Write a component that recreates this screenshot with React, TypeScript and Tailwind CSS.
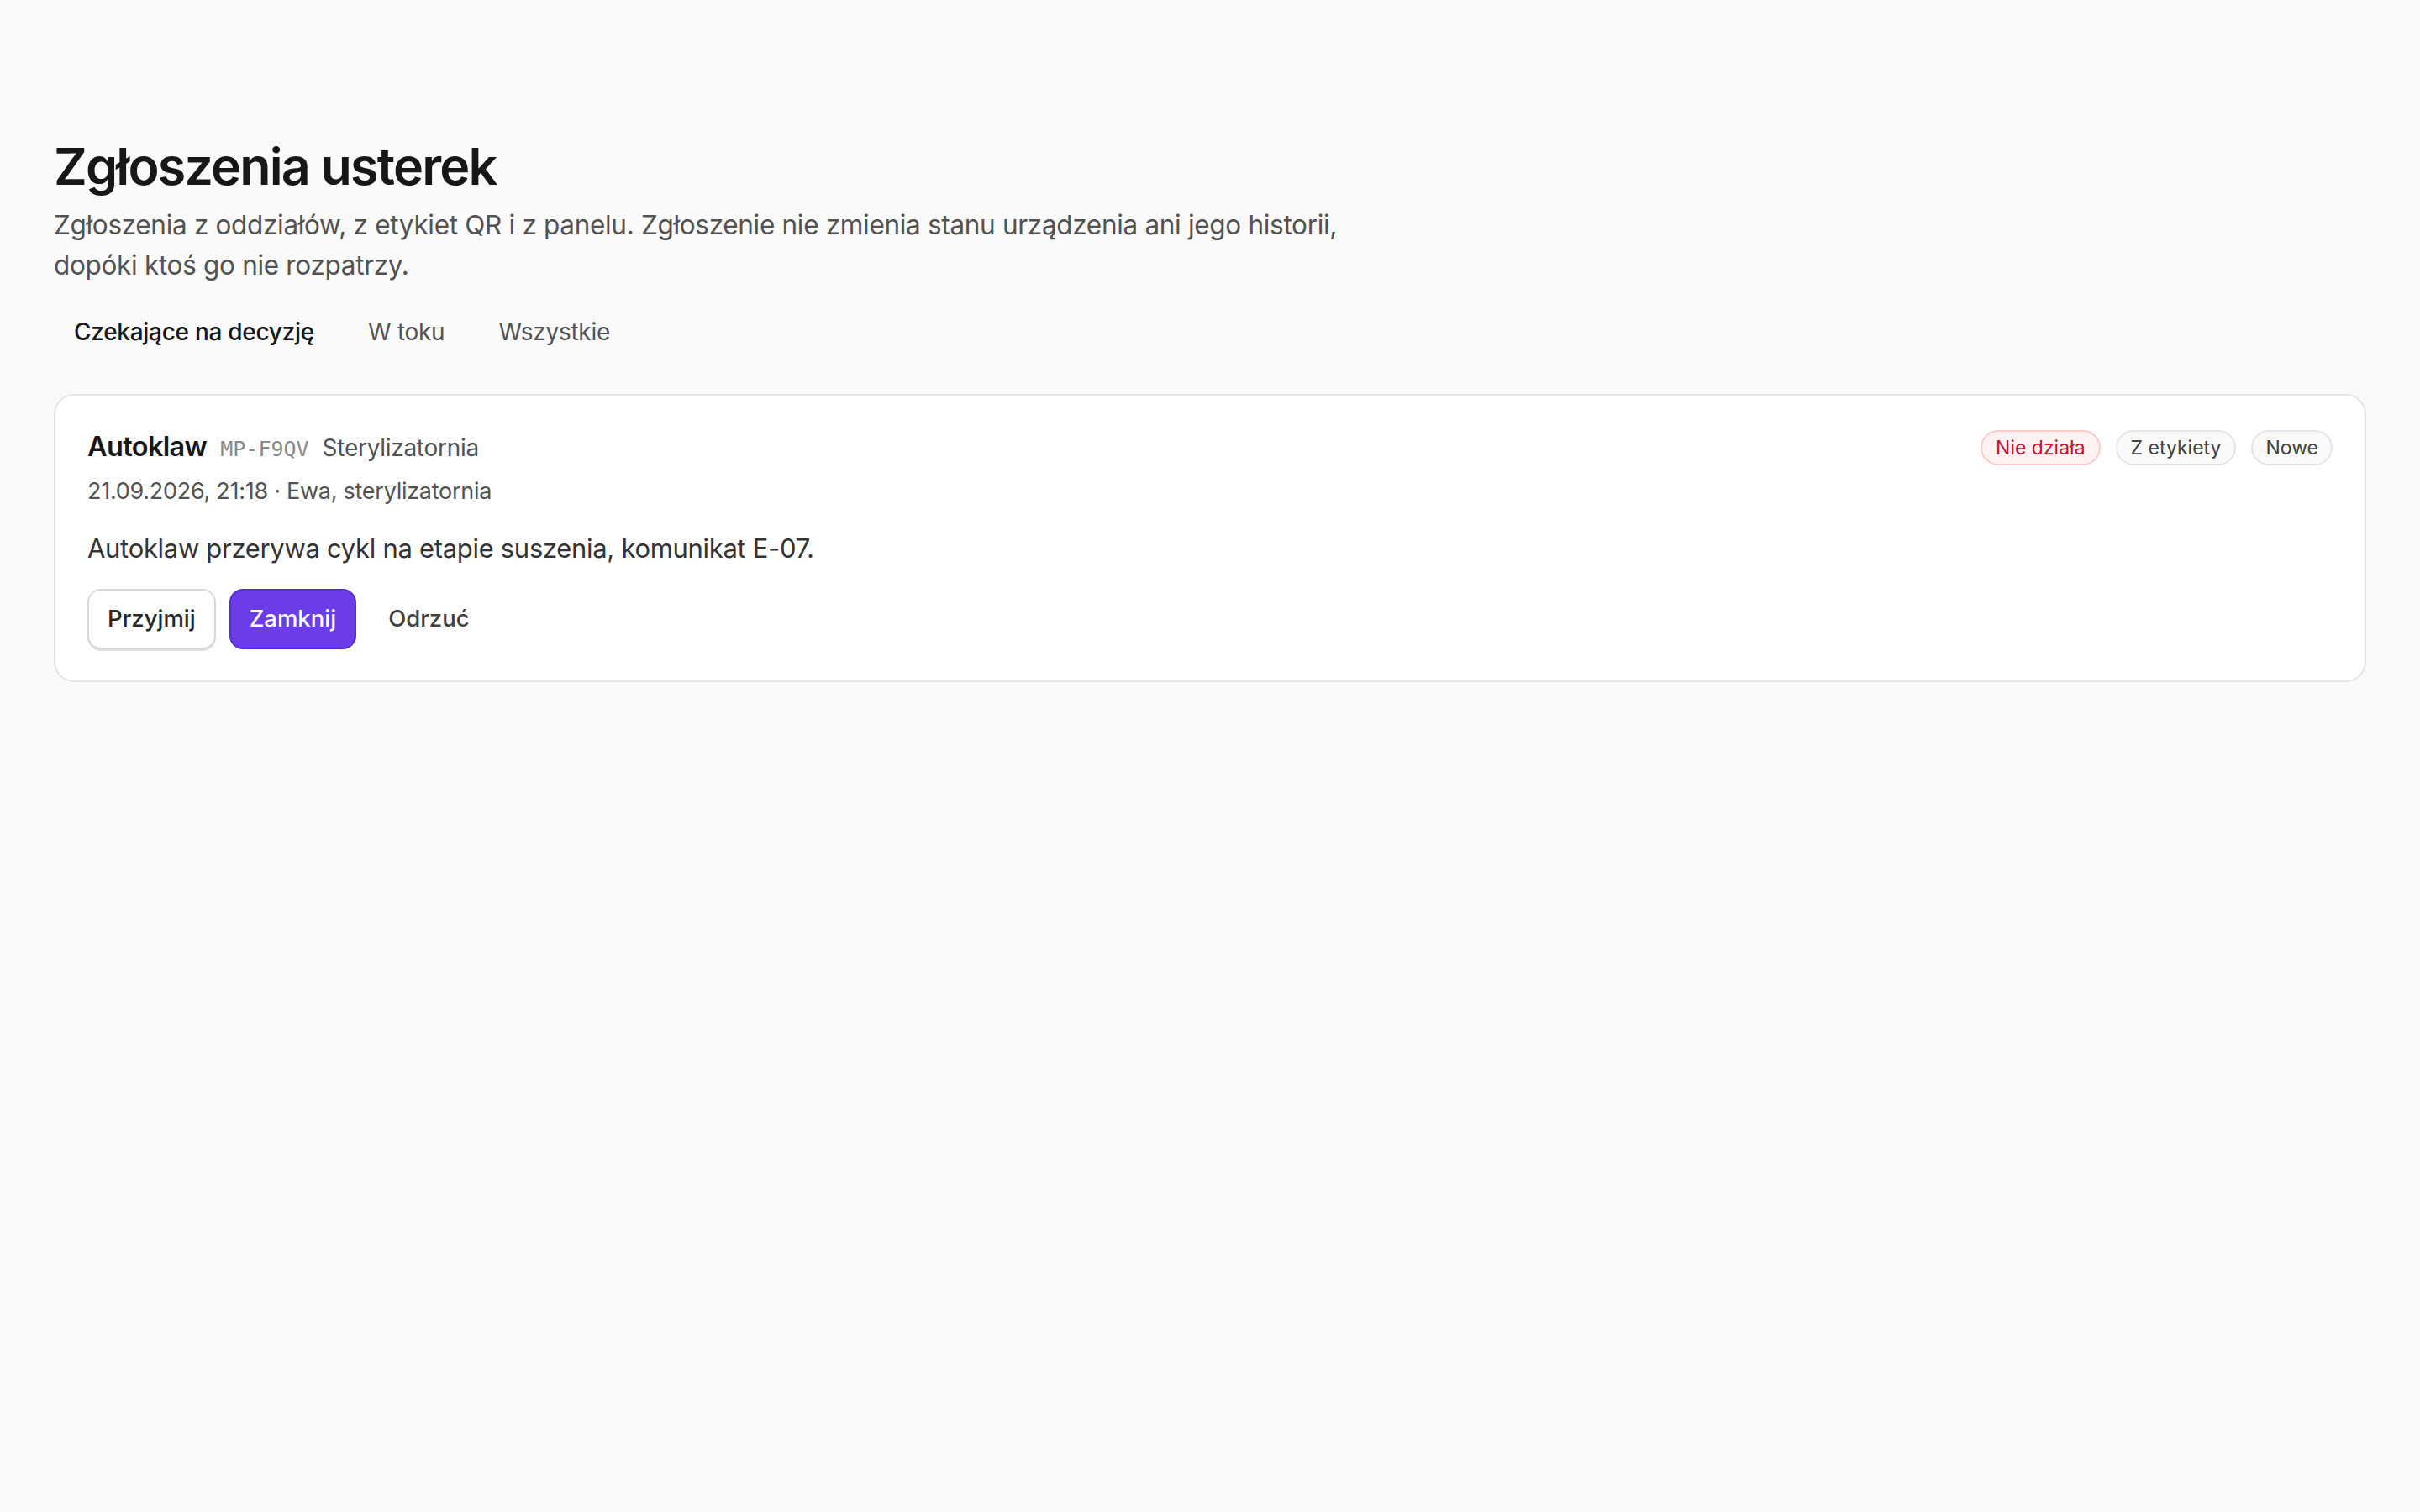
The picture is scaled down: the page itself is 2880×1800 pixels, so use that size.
export default function App() {
  const tabs = ["Czekające na decyzję", "W toku", "Wszystkie"];

  return (
    <div className="min-h-screen bg-[#fafafa] font-['Inter',sans-serif] text-[#171717]">
      <div className="px-16 pt-[162px]">
        <h1 className="text-[61px] font-semibold leading-[72px] tracking-[-0.03em]">Zgłoszenia usterek</h1>
        <p className="mt-[10px] max-w-[1600px] text-[31.5px] leading-[48px] tracking-[-0.01em] text-[#525252]">
          Zgłoszenia z oddziałów, z etykiet QR i z panelu. Zgłoszenie nie zmienia stanu urządzenia ani jego historii,
          dopóki ktoś go nie rozpatrzy.
        </p>

        {/* status tabs */}
        <div className="mt-[21px] flex gap-4">
          {tabs.map((t, i) => (
            <button
              key={t}
              className={
                i === 0
                  ? "px-6 py-3 text-[28px] leading-[44px] font-medium tracking-[-0.01em] text-[#171717]"
                  : "px-6 py-3 text-[28px] leading-[44px] tracking-[-0.01em] text-[#525252]"
              }
            >
              {t}
            </button>
          ))}
        </div>

        {/* report card */}
        <div className="mt-[40px] rounded-[24px] border-2 border-[#e5e5e5] bg-white px-[38px] pt-[41px] pb-[37px]">
          <div className="flex items-center justify-between">
            <div className="flex items-baseline gap-4">
              <span className="text-[32.5px] leading-[40px] font-semibold tracking-[-0.02em]">Autoklaw</span>
              <span className="font-['DejaVu_Sans_Mono',monospace] text-[25px] text-[#8a8a8a]">MP-F9QV</span>
              <span className="text-[28px] tracking-[-0.01em] text-[#525252]">Sterylizatornia</span>
            </div>
            <div className="flex items-center gap-[18px] text-[23px]">
              <span className="flex h-[42px] items-center rounded-full border-2 border-[#fecaca] bg-[#fef2f2] px-4 text-[#c8102e]">
                Nie działa
              </span>
              <span className="flex h-[42px] items-center rounded-full border-2 border-[#e5e5e5] bg-[#fafafa] px-4 text-[#404040]">
                Z etykiety
              </span>
              <span className="flex h-[42px] items-center rounded-full border-2 border-[#e5e5e5] bg-[#fafafa] px-[15px] text-[#404040]">
                Nowe
              </span>
            </div>
          </div>
          <div className="mt-[11px] text-[27px] leading-[40px] tracking-[-0.01em] text-[#525252]">
            21.09.2026, 21:18 · Ewa, sterylizatornia
          </div>
          <p className="mt-6 text-[31px] leading-[48px] tracking-[-0.01em] text-[#333333]">
            Autoklaw przerywa cykl na etapie suszenia, komunikat E-07.
          </p>
          <div className="mt-6 flex gap-4">
            <button className="h-[72px] rounded-[16px] border-2 border-[#d9d9d9] bg-white px-[22px] text-[27.5px] font-medium text-[#262626] shadow-[0_2px_0_#e0e0e0]">
              Przyjmij
            </button>
            <button className="h-[72px] rounded-[16px] border-2 border-[#5630cf] bg-[#6a3de8] px-[22px] text-[27.5px] font-medium text-white">
              Zamknij
            </button>
            <button className="h-[72px] rounded-[16px] px-[22px] text-[27.5px] font-medium text-[#404040]">Odrzuć</button>
          </div>
        </div>
      </div>
    </div>
  );
}
